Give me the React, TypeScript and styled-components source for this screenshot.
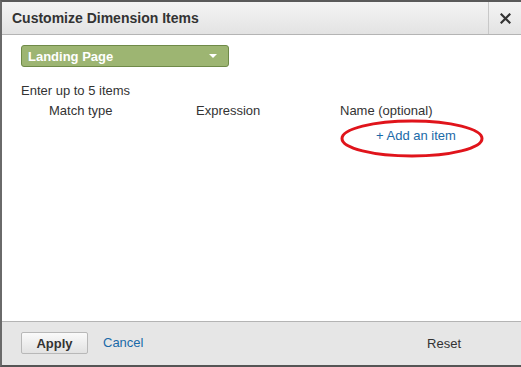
import styled, { createGlobalStyle } from "styled-components";

const GlobalStyle = createGlobalStyle`
  html, body {
    margin: 0;
    padding: 0;
    background: #ffffff;
  }
  body {
    font-family: "Liberation Sans", Arial, sans-serif;
    color: #333333;
  }
`;

const App = () => {
  return (
    <>
      <GlobalStyle />
      <Dialog>
        <Header>
          <Title>Customize Dimension Items</Title>
          <Close aria-label="close">
            <svg width="11" height="11" viewBox="0 0 11 11">
              <path d="M1.5 1.5 L9.5 9.5 M9.5 1.5 L1.5 9.5" stroke="#333" strokeWidth="2.2" strokeLinecap="square" />
            </svg>
          </Close>
        </Header>
        <Body>
          <Select>
            <span>Landing Page</span>
            <Caret />
          </Select>
          <Hint>Enter up to 5 items</Hint>
          <Columns>
            <Col>Match type</Col>
            <Col>Expression</Col>
            <Col>Name (optional)</Col>
          </Columns>
          <AddRow>
            <AddWrap>
              <Link>+ Add an item</Link>
              <Ellipse width="144" height="40" viewBox="0 0 144 40">
                <ellipse cx="72" cy="19.5" rx="70" ry="17.5" fill="none" stroke="#e0141b" strokeWidth="3" />
              </Ellipse>
            </AddWrap>
          </AddRow>
        </Body>
        <Footer>
          <ApplyButton>Apply</ApplyButton>
          <Link>Cancel</Link>
          <Spacer />
          <ResetLink>Reset</ResetLink>
        </Footer>
      </Dialog>
    </>
  );
};

export default App;

const Dialog = styled.div`
  width: 521px;
  height: 367px;
  box-sizing: border-box;
  border-top: 2px solid #5a5a5a;
  border-left: 2px solid #6a6a6a;
  border-bottom: 2px solid #555555;
  display: flex;
  flex-direction: column;
  background: #ffffff;
`;

const Header = styled.div`
  height: 33px;
  box-sizing: border-box;
  display: flex;
  align-items: stretch;
  background: linear-gradient(#f4f4f4, #e3e3e3);
  border-bottom: 1px solid #b4b4b4;
`;

const Title = styled.div`
  flex: 1;
  display: flex;
  align-items: center;
  padding-left: 10px;
  font-size: 14px;
  font-weight: bold;
  color: #333333;
`;

const Close = styled.div`
  width: 32px;
  border-left: 1px solid #c8c8c8;
  display: flex;
  align-items: center;
  justify-content: center;
`;

const Body = styled.div`
  flex: 1;
  padding: 10px 0 0 19px;
  font-size: 13px;
`;

const Select = styled.div`
  width: 208px;
  height: 22px;
  box-sizing: border-box;
  border: 1px solid #6f8a48;
  border-radius: 3px;
  background: #9db572;
  color: #ffffff;
  font-weight: bold;
  font-size: 13px;
  display: flex;
  align-items: center;
  justify-content: space-between;
  padding: 0 11px 0 6px;
`;

const Caret = styled.span`
  width: 0;
  height: 0;
  border-left: 4px solid transparent;
  border-right: 4px solid transparent;
  border-top: 4px solid #ffffff;
`;

const Hint = styled.div`
  margin-top: 16px;
  line-height: 16px;
`;

const Columns = styled.div`
  display: grid;
  grid-template-columns: 147px 144px auto;
  padding-left: 28px;
  line-height: 16px;
  margin-top: 4px;
`;

const Col = styled.div`
  color: #333333;
`;

const AddRow = styled.div`
  display: flex;
  padding-left: 322px;
  margin-top: 3px;
`;

const AddWrap = styled.div`
  position: relative;
  width: 142px;
  height: 37px;
  display: flex;
  justify-content: center;
  padding-top: 6px;
  padding-left: 4px;
  box-sizing: border-box;
`;

const Ellipse = styled.svg`
  position: absolute;
  left: -3px;
  top: -3px;
`;

const Link = styled.span`
  color: #1a6aa8;
  font-size: 13px;
  line-height: 16px;
`;

const Footer = styled.div`
  height: 44px;
  box-sizing: border-box;
  border-top: 1px solid #b4b4b4;
  background: #e6e6e6;
  display: flex;
  align-items: center;
  padding: 0 0 1px 19px;
  gap: 15px;
  font-size: 13px;
`;

const ApplyButton = styled.div`
  width: 67px;
  height: 22px;
  box-sizing: border-box;
  border: 1px solid #b8b8b8;
  border-radius: 2px;
  background: linear-gradient(#fafafa, #e2e2e2);
  display: flex;
  align-items: center;
  justify-content: center;
  font-weight: bold;
  color: #333333;
`;

const Spacer = styled.div`
  flex: 1;
`;

const ResetLink = styled.span`
  color: #333333;
  margin-right: 60px;
`;
